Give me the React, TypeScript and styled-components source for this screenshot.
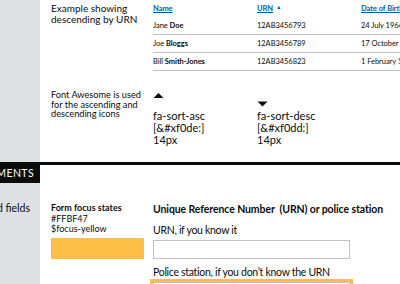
import styled, { createGlobalStyle } from "styled-components";

const Global = createGlobalStyle`
  body {
    margin: 0;
    background: #fff;
    color: #0b0c0c;
    font-family: Lato, "Liberation Sans", Arial, sans-serif;
  }
`;

type Person = { first: string; last: string; urn: string; dob: string };

const people: Person[] = [
  { first: "Jane", last: "Doe", urn: "12AB3456793", dob: "24 July 1964" },
  { first: "Joe", last: "Bloggs", urn: "12AB3456789", dob: "17 October 1971" },
  { first: "Bill", last: "Smith-Jones", urn: "12AB3456823", dob: "1 February 1959" },
];

const SortIcon = ({ dir }: { dir: "asc" | "desc" }) => (
  <svg width="12" height="18" viewBox="0 0 12 18">
    {dir === "asc" ? (
      <polygon points="0.5,8 10.5,8 5.5,3" fill="#0b0c0c" />
    ) : (
      <polygon points="0.5,11.5 10.5,11.5 5.5,16.5" fill="#0b0c0c" />
    )}
  </svg>
);

export default function App() {
  return (
    <>
      <Global />
      <S.Page>
        <S.Section $height={162}>
          <S.Side />
          <S.Content>
            <S.Row>
              <S.Note>
                Example showing
                <br />
                descending by URN
              </S.Note>
              <S.Table>
                <thead>
                  <tr>
                    <S.Th>
                      <S.Link href="#name">Name</S.Link>
                    </S.Th>
                    <S.Th>
                      <S.Link href="#urn">URN</S.Link>
                      <S.Caret>▲</S.Caret>
                    </S.Th>
                    <S.Th>
                      <S.Link href="#dob">Date of Birth</S.Link>
                    </S.Th>
                  </tr>
                </thead>
                <tbody>
                  {people.map((p) => (
                    <tr key={p.urn}>
                      <S.Td>
                        {p.first} <b>{p.last}</b>
                      </S.Td>
                      <S.Td>{p.urn}</S.Td>
                      <S.Td>{p.dob}</S.Td>
                    </tr>
                  ))}
                </tbody>
              </S.Table>
            </S.Row>
            <S.Row $gap={18}>
              <S.SmallNote>
                Font Awesome is used
                <br />
                for the ascending and
                <br />
                descending icons
              </S.SmallNote>
              <S.Icons>
                <S.Spec>
                  <SortIcon dir="asc" />
                  <S.SpecText>
                    fa-sort-asc
                    <br />
                    [&amp;#xf0de:]
                    <br />
                    14px
                  </S.SpecText>
                </S.Spec>
                <S.Spec>
                  <SortIcon dir="desc" />
                  <S.SpecText>
                    fa-sort-desc
                    <br />
                    [&amp;#xf0dd:]
                    <br />
                    14px
                  </S.SpecText>
                </S.Spec>
              </S.Icons>
            </S.Row>
          </S.Content>
        </S.Section>

        <S.Bar>
          <S.BarLabel>FORM ELEMENTS</S.BarLabel>
          <S.Rule />
        </S.Bar>

        <S.Section>
          <S.Side>
            <S.SideText>Grouped fields</S.SideText>
          </S.Side>
          <S.Content>
            <S.Row>
              <S.FocusSpec>
                <b>Form focus states</b>
                <br />
                #FFBF47
                <br />
                $focus-yellow
                <S.Swatch />
              </S.FocusSpec>
              <S.Form>
                <S.Legend>Unique Reference Number&nbsp; (URN) or police station</S.Legend>
                <S.Label>URN, if you know it</S.Label>
                <S.Input />
                <S.Label $gap={7}>Police station, if you don’t know the URN</S.Label>
                <S.Input $focus />
              </S.Form>
            </S.Row>
          </S.Content>
        </S.Section>
      </S.Page>
    </>
  );
}

const S = {
  Page: styled.div`
    width: 400px;
    height: 284px;
    overflow: hidden;
    display: flex;
    flex-direction: column;
  `,
  Section: styled.div<{ $height?: number }>`
    display: grid;
    grid-template-columns: 40px 1fr;
    height: ${(p) => (p.$height ? `${p.$height}px` : "auto")};
    flex: ${(p) => (p.$height ? "none" : "1")};
  `,
  Side: styled.div`
    background: #dee0e2;
    display: flex;
    justify-content: flex-end;
    overflow: hidden;
  `,
  SideText: styled.div`
    font-size: 10.5px;
    line-height: 12px;
    padding: 19px 10px 0 0;
    white-space: nowrap;
  `,
  Content: styled.div`
    padding-left: 11px;
    overflow: hidden;
    display: flex;
    flex-direction: column;
  `,
  Row: styled.div<{ $gap?: number }>`
    display: grid;
    grid-template-columns: 102px 1fr;
    margin-top: ${(p) => p.$gap ?? 0}px;
  `,
  Note: styled.div`
    font-size: 10px;
    line-height: 11px;
    padding-top: 3px;
  `,
  SmallNote: styled.div`
    font-size: 9.2px;
    line-height: 9.5px;
    padding-top: 1px;
  `,
  Table: styled.table`
    border-collapse: collapse;
    table-layout: fixed;
    width: 312px;
    font-size: 7.5px;
    letter-spacing: -0.05px;
  `,
  Th: styled.th`
    width: 104px;
    height: 17px;
    padding: 0;
    text-align: left;
    font-weight: 700;
    white-space: nowrap;
  `,
  Td: styled.td`
    height: 17px;
    padding: 0;
    border-bottom: 1px solid #bfc1c3;
    white-space: nowrap;
    overflow: hidden;
    b {
      font-weight: 700;
    }
  `,
  Link: styled.a`
    color: #005ea5;
    text-decoration: underline;
  `,
  Caret: styled.span`
    color: #005ea5;
    font-size: 5.5px;
    margin-left: 3px;
    vertical-align: 2px;
  `,
  Icons: styled.div`
    display: grid;
    grid-template-columns: 104px 104px;
    margin-top: 1px;
  `,
  Spec: styled.div`
    display: flex;
    flex-direction: column;
    svg {
      display: block;
    }
  `,
  SpecText: styled.div`
    font-size: 11px;
    line-height: 12px;
    margin-top: 2px;
  `,
  Bar: styled.div`
    display: grid;
    grid-template-columns: 40px 1fr;
    height: 21px;
    flex: none;
  `,
  BarLabel: styled.div`
    background: #0b0c0c;
    color: #fff;
    font-size: 10.5px;
    font-weight: 400;
    letter-spacing: 0.4px;
    display: flex;
    align-items: center;
    justify-content: flex-end;
    padding-right: 6px;
    overflow: hidden;
    white-space: nowrap;
  `,
  Rule: styled.div`
    border-top: 3px solid #0b0c0c;
  `,
  FocusSpec: styled.div`
    font-size: 9px;
    line-height: 10.5px;
    padding-top: 20px;
    b {
      font-weight: 700;
    }
  `,
  Swatch: styled.div`
    width: 93px;
    height: 21px;
    margin-top: 3px;
    background: #ffbf47;
  `,
  Form: styled.div`
    display: flex;
    flex-direction: column;
    padding-top: 20px;
  `,
  Legend: styled.div`
    font-size: 10.5px;
    line-height: 13px;
    font-weight: 700;
    letter-spacing: -0.1px;
    white-space: nowrap;
  `,
  Label: styled.div<{ $gap?: number }>`
    font-size: 10.5px;
    line-height: 13px;
    letter-spacing: -0.3px;
    margin-top: ${(p) => p.$gap ?? 8}px;
    margin-bottom: 3px;
    white-space: nowrap;
  `,
  Input: styled.div<{ $focus?: boolean }>`
    box-sizing: border-box;
    width: 197px;
    height: 19px;
    flex: none;
    border: 1.5px solid #bfc1c3;
    outline: ${(p) => (p.$focus ? "3px solid #ffbf47" : "none")};
  `,
};
